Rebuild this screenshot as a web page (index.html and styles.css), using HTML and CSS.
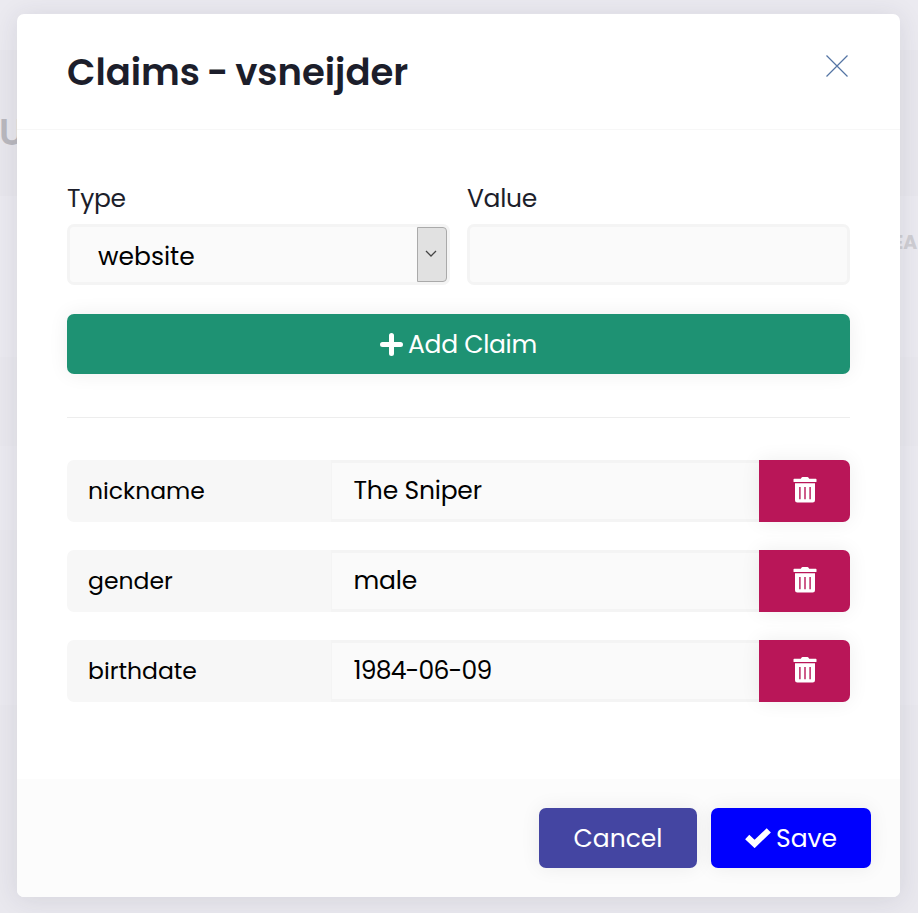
FILE: index.html
```html
<!DOCTYPE html>
<html lang="en">
<head>
<meta charset="utf-8">
<title>Claims - vsneijder</title>
<link rel="stylesheet" href="styles.css">
</head>
<body>
<svg class="symbols" aria-hidden="true">
  <symbol id="trash" viewBox="0 0 24 26">
    <path fill="#fff" fill-rule="evenodd" d="M1.2 1.7h6.6L8.6.5Q8.900 0 9.500 0h5Q15.100 0 15.400.5l.8 1.200h6.600q.7 0 .7.7v2q0 .6-.7.6H1.200q-.7 0-.7-.6v-2q0-.7.7-.7zM2 6.300h20v17q0 2.300-2.300 2.300H4.300Q2 25.600 2 23.300zM6.200 10v12.300h1.400V10zm5.100 0v12.300h1.400V10zm5.100 0v12.300h1.400V10z"/>
  </symbol>
</svg>
<div class="backdrop-title">U</div>
<div class="backdrop-column">EA</div>
<main class="modal">
  <header class="modal-header">
    <h1 class="title">Claims - vsneijder</h1>
    <button class="close" aria-label="Close"><svg viewBox="0 0 22 22" width="22" height="22"><path d="M.5.5l21 21M21.500.5l-21 21" fill="none" stroke="#5474a4" stroke-width="1.200"/></svg></button>
  </header>
  <section class="modal-body">
    <div class="fields">
      <div class="field">
        <div class="label type">Type</div>
        <div class="control select"><span class="website">website</span><span class="arrow"><svg width="12" height="8" viewBox="0 0 12 8"><path d="M1 1l5 5 5-5" fill="none" stroke="#444" stroke-width="1.300"/></svg></span></div>
      </div>
      <div class="field">
        <div class="label value">Value</div>
        <div class="control"></div>
      </div>
    </div>
    <button class="btn add"><svg width="23" height="23" viewBox="0 0 23 23"><path d="M11.500 2.500v18M2.500 11.500h18" stroke="#fff" stroke-width="5" stroke-linecap="round"/></svg><span class="add-text">Add Claim</span></button>
    <hr>
    <div class="claims">
      <div class="claim"><div class="name"><span>nickname</span></div><div class="data"><span class="sniper">The Sniper</span></div><button class="delete" aria-label="Delete"><svg width="24" height="26"><use href="#trash"/></svg></button></div>
      <div class="claim"><div class="name"><span>gender</span></div><div class="data"><span class="sniper">male</span></div><button class="delete" aria-label="Delete"><svg width="24" height="26"><use href="#trash"/></svg></button></div>
      <div class="claim"><div class="name"><span>birthdate</span></div><div class="data"><span class="date">1984-06-09</span></div><button class="delete" aria-label="Delete"><svg width="24" height="26"><use href="#trash"/></svg></button></div>
    </div>
  </section>
  <footer class="modal-footer">
    <button class="btn cancel"><span>Cancel</span></button>
    <button class="btn save"><svg width="26" height="20" viewBox="0 0 26 20"><path d="M2.200 9l7.400 7L23.800 2.300" fill="none" stroke="#fff" stroke-width="6"/></svg><span>Save</span></button>
  </footer>
</main>
</body>
</html>
```
FILE: styles.css
```css
* { box-sizing: border-box; }
body {
  margin: 0;
  height: 913px;
  padding: 14px 18px 16px 17px;
  overflow: hidden;
  position: relative;
  font: 25px/38px Poppins, Inter, "Open Sans", sans-serif;
  color: #000;
  background: linear-gradient(#ebeaf0 50px, #e8e7ed 50px 196px, #ebeaf0 196px 357px, #e9e8ee 357px 446px, #ebeaf0 446px 530px, #e9e8ee 530px 620px, #ebeaf0 620px 705px, #e9e8ee 705px);
}
.symbols { position: absolute; width: 0; height: 0; }
.backdrop-title, .backdrop-column { position: absolute; font-weight: 600; }
.backdrop-title { left: -1px; top: 113px; font-size: 37px; color: #b9b8be; }
.backdrop-column { left: 893px; top: 224px; font-size: 19px; font-weight: 700; color: #cfced3; }
.modal {
  position: relative;
  height: 883px;
  display: flex;
  flex-direction: column;
  background: #fff;
  border-radius: 7px;
  overflow: hidden;
  box-shadow: 0 2px 26px rgba(50, 45, 70, .11);
}
button { font: inherit; border: 0; padding: 0; }
.modal-header {
  height: 116px;
  padding: 29px 52px 0 50px;
  display: flex;
  justify-content: space-between;
  align-items: flex-start;
  border-bottom: 1px solid #f7f7f7;
}
.title { margin: 0; font-size: 37px; line-height: 58px; font-weight: 600; color: #1c1e2b; word-spacing: -2px; white-space: nowrap; }
.close { background: none; width: 22px; height: 22px; margin-top: 12px; }
.close svg { display: block; }
.modal-body { height: 649px; padding: 49px 50px 0; }
.fields { display: grid; grid-template-columns: 1fr 1fr; gap: 17px; }
.label { line-height: 40px; height: 45px; color: #1c1e2b; letter-spacing: -.3px; }
.control { height: 61px; border: 3px solid #f4f4f4; border-radius: 7px; background: #fafafa; }
.select { display: flex; justify-content: space-between; padding-left: 28px; }
.website { padding-top: 11px; }
.arrow { width: 30px; height: 55px; border: 1px solid #aaa; border-radius: 0 4px 4px 0; background: #e1e1e1; display: flex; align-items: center; justify-content: center; padding: 0 2px 1px 0; }
.btn { height: 60px; border-radius: 7px; color: #fff; display: flex; align-items: center; justify-content: center; white-space: nowrap; box-shadow: 0 0 20px rgba(0, 0, 0, .07); }
.btn svg { flex: none; }
.btn span { padding-top: 2px; }
.add { width: 100%; margin-top: 29px; background: #1e9273; justify-content: flex-start; padding-left: 313px; gap: 5px; }
.add-text { letter-spacing: -.3px; }
hr { margin: 43px 0 42px; border: 0; border-top: 1px solid #ededed; }
.claims { display: grid; gap: 28px; }
.claim { display: grid; grid-template-columns: 264px 428px 91px; height: 62px; line-height: 62px; white-space: nowrap; }
.name { background: #f7f7f7; border-radius: 7px 0 0 7px; padding-left: 21px; font-size: 23.500px; }
.data { border: 3px solid #f4f4f4; border-width: 3px 0 3px 1px; background: #fafafa; padding-left: 21.500px; line-height: 56px; }
.sniper { letter-spacing: -.2px; }
.date { letter-spacing: -.8px; }
.delete { background: #b91658; border-radius: 0 7px 7px 0; display: flex; justify-content: center; align-items: flex-start; padding-top: 17px; box-shadow: 0 0 20px rgba(0, 0, 0, .07); }
.modal-footer { height: 118px; padding: 29px 29px 0; display: flex; justify-content: flex-end; gap: 14px; background: #fcfcfc; }
.cancel { width: 158px; background: #4445a2; }
.save { width: 160px; background: #0000fe; justify-content: flex-start; padding-left: 34px; gap: 5px; }
```
